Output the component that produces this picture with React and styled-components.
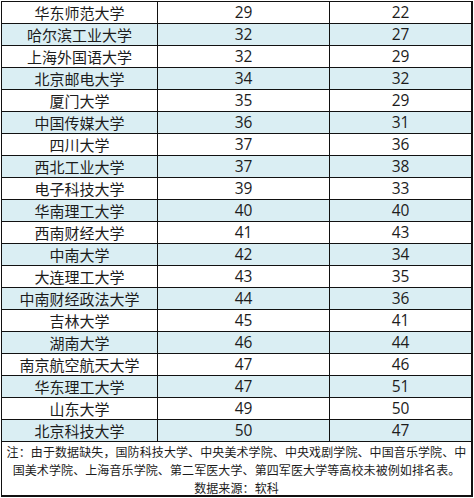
import React from 'react';
import styled, { createGlobalStyle } from 'styled-components';

const GlobalStyle = createGlobalStyle`
  html, body {
    margin: 0;
    padding: 0;
    background: #ffffff;
  }
  body {
    width: 474px;
    height: 498px;
    overflow: hidden;
    font-family: "Noto Sans CJK SC", "Noto Sans", sans-serif;
    color: #1c1c1c;
  }
`;

const rows = [
  ['华东师范大学', 29, 22],
  ['哈尔滨工业大学', 32, 27],
  ['上海外国语大学', 32, 29],
  ['北京邮电大学', 34, 32],
  ['厦门大学', 35, 29],
  ['中国传媒大学', 36, 31],
  ['四川大学', 37, 36],
  ['西北工业大学', 37, 38],
  ['电子科技大学', 39, 33],
  ['华南理工大学', 40, 40],
  ['西南财经大学', 41, 43],
  ['中南大学', 42, 34],
  ['大连理工大学', 43, 35],
  ['中南财经政法大学', 44, 36],
  ['吉林大学', 45, 41],
  ['湖南大学', 46, 44],
  ['南京航空航天大学', 47, 46],
  ['华东理工大学', 47, 51],
  ['山东大学', 49, 50],
  ['北京科技大学', 50, 47],
];

const Table = styled.div`
  margin: 1px 0 0 1px;
  width: 472px;
  box-sizing: border-box;
  border-top: 1px solid #111;
  border-left: 1px solid #111;
  border-right: 2px solid #111;
`;

const Row = styled.div`
  display: grid;
  grid-template-columns: 156px 172px 141px;
  height: 22px;
  box-sizing: border-box;
  border-bottom: 1px solid #111;
  background: ${p => (p.$shaded ? '#daeef3' : '#ffffff')};
`;

const Cell = styled.div`
  display: flex;
  align-items: center;
  justify-content: center;
  box-sizing: border-box;
  border-right: ${p => (p.$last ? 'none' : '1px solid #111')};
  font-size: ${p => (p.$num ? '15.5px' : '15px')};
  font-family: ${p =>
    p.$num
      ? '"Open Sans", "Liberation Sans", sans-serif'
      : '"Noto Sans CJK SC", sans-serif'};
  line-height: 21px;
  white-space: nowrap;
`;

const Note = styled.div`
  height: 55px;
  box-sizing: border-box;
  padding-top: 1px;
  border-bottom: 2px solid #111;
  font-size: 12px;
  line-height: 18px;
  text-align: center;
  white-space: nowrap;
  letter-spacing: 0.1px;
`;

export default function App() {
  return (
    <>
      <GlobalStyle />
      <Table>
        {rows.map(([name, a, b], i) => (
          <Row key={name} $shaded={i % 2 === 1}>
            <Cell>{name}</Cell>
            <Cell $num>{a}</Cell>
            <Cell $num $last>{b}</Cell>
          </Row>
        ))}
        <Note>
          注：由于数据缺失，国防科技大学、中央美术学院、中央戏剧学院、中国音乐学院、中
          <br />
          国美术学院、上海音乐学院、第二军医大学、第四军医大学等高校未被例如排名表。
          <br />
          数据来源：软科
        </Note>
      </Table>
    </>
  );
}
